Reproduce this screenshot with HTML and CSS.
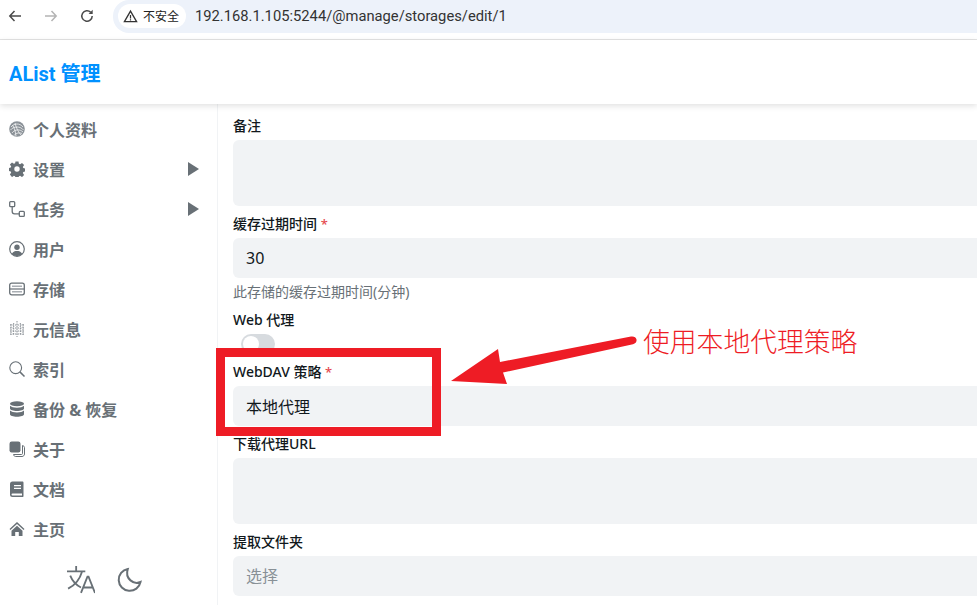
FILE: index.html
```html
<!DOCTYPE html>
<html lang="zh-CN">
<head>
<meta charset="utf-8">
<title>AList 管理</title>
<link rel="stylesheet" href="styles.css">
</head>
<body>
<div class="app">
  <div class="browser">
    <svg class="nav-icon" viewBox="0 0 16 16"><path d="M14 8H3M7.500 3 2.800 8l4.700 5" fill="none" stroke="#4a4a4a" stroke-width="1.500"/></svg>
    <svg class="nav-icon" viewBox="0 0 16 16"><path d="M2 8h11M8.500 3l4.700 5-4.700 5" fill="none" stroke="#b4b4b4" stroke-width="1.500"/></svg>
    <svg class="nav-icon" viewBox="0 0 16 16"><path d="M13.200 8a5.200 5.200 0 1 1-1.500-3.700" fill="none" stroke="#4a4a4a" stroke-width="1.500"/><path d="M13.700 1.800v4.100H9.600z" fill="#4a4a4a"/></svg>
    <div class="omnibox">
      <div class="chip">
        <svg class="warn" viewBox="0 0 16 16"><path d="M8 2.200 14.500 13.500H1.500z" fill="none" stroke="#333" stroke-width="1.400"/><path d="M8 6.500v3.700M8 11v1.300" stroke="#333" stroke-width="1.300"/></svg>
        <span>不安全</span>
      </div>
      <span class="url">192.168.1.105:5244/@manage/storages/edit/1</span>
    </div>
  </div>
  <header class="topbar"><span class="brand">AList 管理</span></header>
  <div class="body">
    <nav class="sidebar">
      <ul class="menu">
        <li class="item"><svg class="icon" viewBox="0 0 16 16"><circle cx="8" cy="8" r="7.800" fill="#8b9298"/><path d="M2 6c3-4 9-4 12 0M1.500 9c3-4 10-4 13 0M3 12c3-4 8-4 11-1M5 14.500c2-3 6-3 8-2M6 2c1 4 3 9 6 12M3.500 4c2 3 3 7 3.500 11" fill="none" stroke="#fff" stroke-width=".7"/></svg><span>个人资料</span></li>
        <li class="item"><svg class="icon" viewBox="0 0 16 16"><path fill-rule="evenodd" d="M6.500.500h3l.4 2.200 1.200.5 1.900-1.300 2.100 2.100-1.300 1.900.5 1.200 2.200.4v3l-2.200.4-.5 1.200 1.300 1.900-2.100 2.100-1.900-1.300-1.200.5-.4 2.200h-3l-.4-2.200-1.200-.5-1.900 1.300L.9 13.500l1.300-1.900-.5-1.200-2.200-.4v-3l2.200-.4.5-1.200L.9 3.500 3 1.400l1.900 1.300 1.200-.5zM8 5.300a2.700 2.700 0 1 0 0 5.400 2.700 2.700 0 0 0 0-5.400z" fill="#687076"/></svg><span>设置</span><i class="caret"></i></li>
        <li class="item"><svg class="icon" viewBox="0 0 16 16"><g fill="none" stroke="#687076" stroke-width="1.300"><rect x=".7" y=".7" width="5" height="5" rx=".9"/><rect x="10.300" y="10.300" width="5" height="5" rx=".9"/><path d="M3.200 5.700v4.700c0 1.700 1 2.400 2.400 2.400h4.700"/></g></svg><span>任务</span><i class="caret"></i></li>
        <li class="item"><svg class="icon" viewBox="0 0 16 16"><circle cx="8" cy="8" r="7.300" fill="none" stroke="#687076" stroke-width="1.200"/><circle cx="8" cy="6.200" r="2.700" fill="#687076"/><path d="M2.800 12.800C4 10.500 6 10 8 10s4 .5 5.200 2.800A7.300 7.300 0 0 1 8 15.200a7.300 7.300 0 0 1-5.200-2.400z" fill="#687076"/></svg><span>用户</span></li>
        <li class="item"><svg class="icon" viewBox="0 0 16 16"><rect x=".7" y="2.200" width="14.600" height="11.600" rx="2" fill="none" stroke="#687076" stroke-width="1.300"/><path d="M1 8h14" stroke="#687076" stroke-width="1.200"/><path d="M3 5.200h10M3 10.800h10" stroke="#a9aeb3" stroke-width="1.400"/></svg><span>存储</span></li>
        <li class="item"><svg class="icon" viewBox="0 0 16 16"><path d="M2 3v11M4.700 2v12M8 0v16M11.300 2v12M14 3v11M1 4h14M1 7h14M1 10h14M1 13h14" stroke="#8a9096" stroke-width="1" stroke-dasharray="1.500 1"/></svg><span>元信息</span></li>
        <li class="item"><svg class="icon" viewBox="0 0 16 16"><circle cx="6.700" cy="6.700" r="5.900" fill="none" stroke="#687076" stroke-width="1.100"/><path d="m10.900 10.900 4.600 4.600" stroke="#687076" stroke-width="1.500"/></svg><span>索引</span></li>
        <li class="item"><svg class="icon" viewBox="0 0 16 16"><g fill="#687076"><ellipse cx="8" cy="2.800" rx="7" ry="2.500"/><path d="M1 4.700c1.200 1.300 3.800 2 7 2s5.800-.7 7-2v2.800c0 1.400-3.100 2.500-7 2.500S1 8.900 1 7.500z"/><path d="M1 9.500c1.200 1.300 3.800 2 7 2s5.800-.7 7-2v3.700c0 1.400-3.100 2.500-7 2.500s-7-1.100-7-2.500z"/></g></svg><span>备份 &amp; 恢复</span></li>
        <li class="item"><svg class="icon" viewBox="0 0 16 16"><rect x=".5" y=".5" width="11" height="11" rx="2.200" fill="#687076"/><path d="M13.500 4.500c1 .2 2 1 2 2.200v6.300c0 1.400-1.100 2.500-2.500 2.500H6.700c-1.200 0-2-.8-2.200-2h8c.6 0 1-.4 1-1z" fill="none" stroke="#687076" stroke-width="1"/></svg><span>关于</span></li>
        <li class="item"><svg class="icon" viewBox="0 0 16 16"><path fill-rule="evenodd" d="M3.500.500h9.800c.8 0 1.200.5 1.200 1.200v13.600c0 .4-.3.700-.7.700H3.500a2.500 2.500 0 0 1-2.500-2.500V3A2.500 2.500 0 0 1 3.500.500zM5 4v1.200h7V4zm0 2.800V8h7V6.800zM3.500 12.500a1 1 0 0 0 0 2H13v-2z" fill="#687076"/></svg><span>文档</span></li>
        <li class="item"><svg class="icon" viewBox="0 0 16 16"><path d="M8 1 .5 8l.9 1L8 3l6.600 6 .9-1zM2.500 9.800 8 4.800l5.500 5V15H9.800v-4H6.200v4H2.500z" fill="#687076"/></svg><span>主页</span></li>
      </ul>
      <div class="tools">
        <svg class="tool" viewBox="1 1 26 26"><path d="M1 6h17M9.500 1v5M15 6C13 13 8 19 2 22M4 10c2 5 6 9 10 11M14 26l6-15h1l6 15M16 21h9" fill="none" stroke="#687076" stroke-width="1.700"/></svg>
        <svg class="tool" viewBox="0 0 28 28"><path d="M12.800 3A11 11 0 1 0 25.500 16C19 19 9.500 13 12.800 3z" fill="none" stroke="#687076" stroke-width="2"/></svg>
      </div>
    </nav>
    <main class="main">
      <form class="form">
        <div class="field"><label class="label">备注</label><textarea class="control area" readonly></textarea></div>
        <div class="field"><label class="label">缓存过期时间 <em>*</em></label><input class="control" value="30" readonly><p class="help">此存储的缓存过期时间(分钟)</p></div>
        <div class="field"><label class="label">Web 代理</label><div class="switch"><i class="knob"></i></div></div>
        <div class="field"><label class="label">WebDAV 策略 <em>*</em></label><input class="control" value="本地代理" readonly></div>
        <div class="field"><label class="label">下载代理URL</label><textarea class="control area" readonly></textarea></div>
        <div class="field"><label class="label">提取文件夹</label><input class="control" placeholder="选择" readonly></div>
      </form>
    </main>
  </div>
  <div class="redbox"></div>
  <svg class="arrow" viewBox="0 0 200 60"><path d="M1 46 48 14 50 27 181 1.500c3-.5 5 .8 5.500 3 .4 2.200-.8 4-3.500 4.800L53 37.500 57 49z" fill="#ee1c25"/></svg>
  <div class="note">使用本地代理策略</div>
</div>
</body>
</html>
```

FILE: styles.css
```css
* { box-sizing: border-box; }
html, body { margin: 0; height: 100%; overflow: hidden; background: #fff; }
body { font-family: "Noto Sans", "Noto Sans CJK SC", sans-serif; color: #11181c; }
.app { position: relative; display: flex; flex-direction: column; width: 100%; height: 100vh; overflow: hidden; }

.browser { display: flex; align-items: flex-start; height: 40px; flex: none; padding-left: 7px; border-bottom: 1px solid #e3e3e3; background: #fff; }
.nav-icon { width: 16px; height: 16px; margin: 8px 20px 0 0; flex: none; }
.nav-icon:nth-child(3) { margin-right: 18px; }
.omnibox { display: flex; align-items: flex-start; flex: 1; height: 33px; padding: 4px 0 0 5px; background: #edf2fa; border-radius: 16px 0 0 16px; }
.chip { display: flex; align-items: center; gap: 5px; width: 68px; height: 24px; padding-left: 5px; background: #fff; border-radius: 12px; font-size: 12px; color: #222; }
.warn { width: 15px; height: 15px; flex: none; }
.url { margin: 1px 0 0 9px; font-family: "Roboto", sans-serif; font-size: 14.740px; line-height: 22px; color: #333; }

.topbar { display: flex; align-items: center; height: 64px; flex: none; padding-left: 9px; background: #fff; box-shadow: 0 2px 6px rgba(0,0,0,.12); position: relative; z-index: 1; }
.brand { font-family: "Roboto", "Noto Sans CJK SC", sans-serif; font-size: 20px; font-weight: 700; color: #0091ff; }

.body { display: flex; flex: 1; min-height: 0; }
.sidebar { display: flex; flex-direction: column; width: 218px; flex: none; padding-top: 5px; border-right: 1px solid #f1f3f5; }
.menu { list-style: none; margin: 0; padding: 0; }
.item { display: flex; align-items: center; gap: 8px; height: 40px; padding: 0 18px 0 9px; font-size: 16px; font-weight: 700; color: #687076; }
.icon { width: 16px; height: 16px; flex: none; }
.caret { margin-left: auto; width: 0; height: 0; border-style: solid; border-width: 7px 0 7px 11px; border-color: transparent transparent transparent #687076; }
.tools { display: flex; justify-content: center; gap: 20px; padding: 17px 7px 0 0; }
.tool { width: 28px; height: 28px; }

.main { flex: 1; min-width: 0; padding: 12px 0 0 15px; }
.form { display: flex; flex-direction: column; gap: 8px; width: 800px; }
.field { display: flex; flex-direction: column; }
.label { display: block; height: 20px; margin-bottom: 4px; font-size: 14px; line-height: 20px; font-weight: 500; color: #11181c; }
.label em { font-style: normal; font-size: 13px; color: #e5484d; }
.control { display: block; width: 100%; height: 40px; padding: 0 13px; border: 0; outline: 0; border-radius: 6px; background: #f1f3f5; font: 400 16px/24px "Noto Sans", "Noto Sans CJK SC", sans-serif; color: #11181c; }
.control::placeholder { color: #889096; opacity: 1; }
.area { height: 66px; resize: none; }
.help { margin: 4px 0 0; font-size: 14px; line-height: 20px; color: #687076; }
.switch { width: 34px; height: 20px; margin-left: 8px; padding: 2px; border-radius: 10px; background: #d7dbdf; }
.knob { display: block; width: 16px; height: 16px; border-radius: 50%; background: #fff; }

.redbox { position: absolute; left: 216px; top: 348px; width: 225px; height: 88px; border: 9px solid #ee1c25; z-index: 2; }
.arrow { position: absolute; left: 450px; top: 335px; width: 200px; height: 60px; z-index: 2; }
.note { position: absolute; left: 643px; top: 322px; font-size: 26.800px; line-height: 40px; font-weight: 300; color: #ee1c25; white-space: nowrap; z-index: 2; }
```
